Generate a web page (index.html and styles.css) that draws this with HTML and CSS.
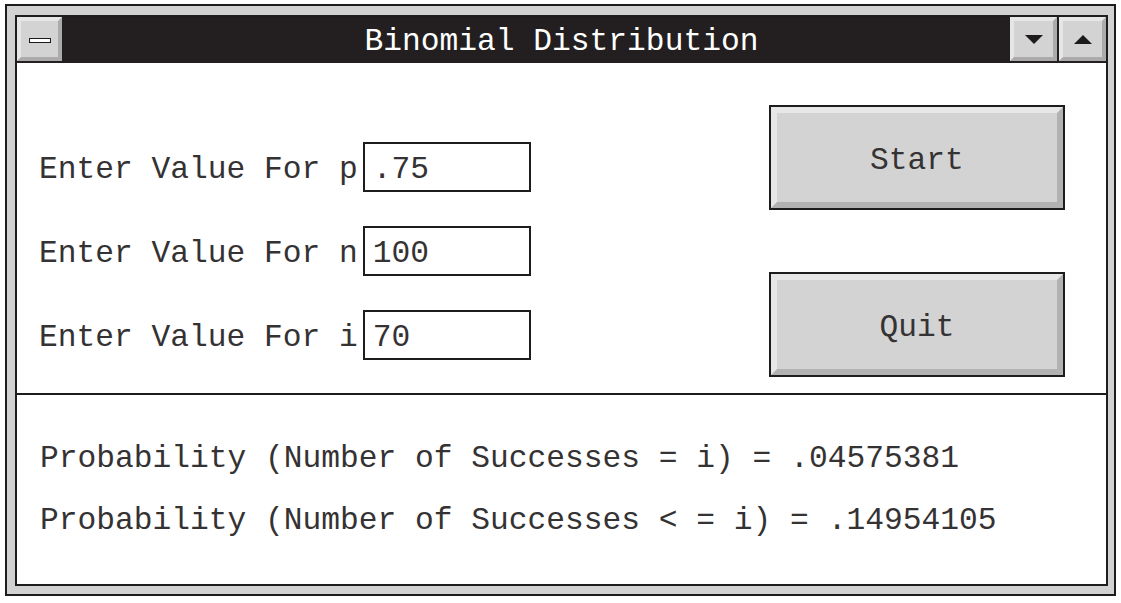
FILE: index.html
```html
<!DOCTYPE html>
<html>
<head>
<meta charset="utf-8">
<title>Binomial Distribution</title>
<link rel="stylesheet" href="styles.css">
</head>
<body>
<div class="window">
  <div class="client">
    <div class="titlebar">
      <div class="tbtn menu"><span class="menu-bar"></span></div>
      <div class="title">Binomial Distribution</div>
      <div class="tbtn down"><svg width="18" height="9" viewBox="0 0 18 9"><polygon points="0,0 18,0 9,9" fill="#1c1a1b"/></svg></div>
      <div class="tbtn up"><svg width="18" height="9" viewBox="0 0 18 9"><polygon points="0,9 18,9 9,0" fill="#1c1a1b"/></svg></div>
    </div>
    <div class="inputs-pane">
      <div class="fields">
        <div class="field"><span class="label">Enter Value For p</span><span class="box">.75</span></div>
        <div class="field"><span class="label">Enter Value For n</span><span class="box">100</span></div>
        <div class="field"><span class="label">Enter Value For i</span><span class="box">70</span></div>
      </div>
      <div class="actions">
        <div class="btn"><div class="btn-face">Start</div></div>
        <div class="btn"><div class="btn-face">Quit</div></div>
      </div>
    </div>
    <div class="results">
      <div class="line">Probability (Number of Successes = i) = .04575381</div>
      <div class="line">Probability (Number of Successes &lt; = i) = .14954105</div>
    </div>
  </div>
</div>
</body>
</html>
```
FILE: styles.css
```css
html, body {
  margin: 0;
  padding: 0;
  background: #ffffff;
}

body {
  font-family: "Liberation Mono", "Courier New", monospace;
  font-size: 31.25px;
  color: #353233;
}

.window {
  margin: 4px 0 0 5px;
  width: 1111px;
  box-sizing: border-box;
  border: 2px solid #1e1c1d;
  background: #d2d2d2;
  padding: 9px 6px 8px 8px;
}

.client {
  border: 2px solid #1e1c1d;
  background: #ffffff;
}

.titlebar {
  display: flex;
  align-items: flex-start;
  height: 46px;
  background: #231f20;
}

.tbtn {
  box-sizing: border-box;
  height: 44px;
  border: 4px solid;
  border-color: #e6e6e6 #ababab #ababab #e6e6e6;
  background: #d3d3d3;
  display: flex;
  align-items: center;
  justify-content: center;
}

.tbtn.menu {
  width: 45px;
  padding-top: 2px;
}

.menu-bar {
  display: block;
  width: 22px;
  height: 5px;
  box-sizing: border-box;
  border: 1px solid #1c1a1b;
  background: #ffffff;
}

.tbtn.down {
  width: 47px;
  margin-left: 2px;
}

.tbtn.up {
  width: 47px;
  margin-left: 2px;
}

.title {
  flex: 1;
  color: #ffffff;
  text-align: center;
  padding-top: 3px;
  line-height: 43px;
  padding-left: 53px;
  white-space: pre;
}

.inputs-pane {
  height: 330px;
  border-bottom: 2px solid #1e1c1d;
  display: flex;
  justify-content: space-between;
  align-items: flex-start;
}

.fields {
  padding: 79px 0 0 22px;
  display: flex;
  flex-direction: column;
  gap: 34px;
}

.field {
  display: flex;
  align-items: flex-start;
  height: 50px;
}

.label {
  padding-top: 5px;
  line-height: 45px;
  white-space: pre;
}

.box {
  margin-left: 5px;
  width: 168px;
  height: 50px;
  box-sizing: border-box;
  border: 2px solid #1e1c1d;
  padding: 3px 0 0 8px;
  line-height: 45px;
  overflow: hidden;
  white-space: pre;
}

.actions {
  margin: 42px 41px 0 0;
  display: flex;
  flex-direction: column;
  gap: 62px;
}

.btn {
  width: 296px;
  height: 105px;
  box-sizing: border-box;
  border: 2px solid #1e1c1d;
}

.btn-face {
  height: 100%;
  box-sizing: border-box;
  border: 6px solid;
  border-color: #e7e7e7 #b2b2b2 #b2b2b2 #e7e7e7;
  background: #d3d3d3;
  display: flex;
  align-items: center;
  justify-content: center;
  padding-top: 5px;
}

.results {
  height: 189px;
  box-sizing: border-box;
  padding: 33px 0 0 23px;
}

.line {
  line-height: 62px;
  white-space: pre;
}
```
